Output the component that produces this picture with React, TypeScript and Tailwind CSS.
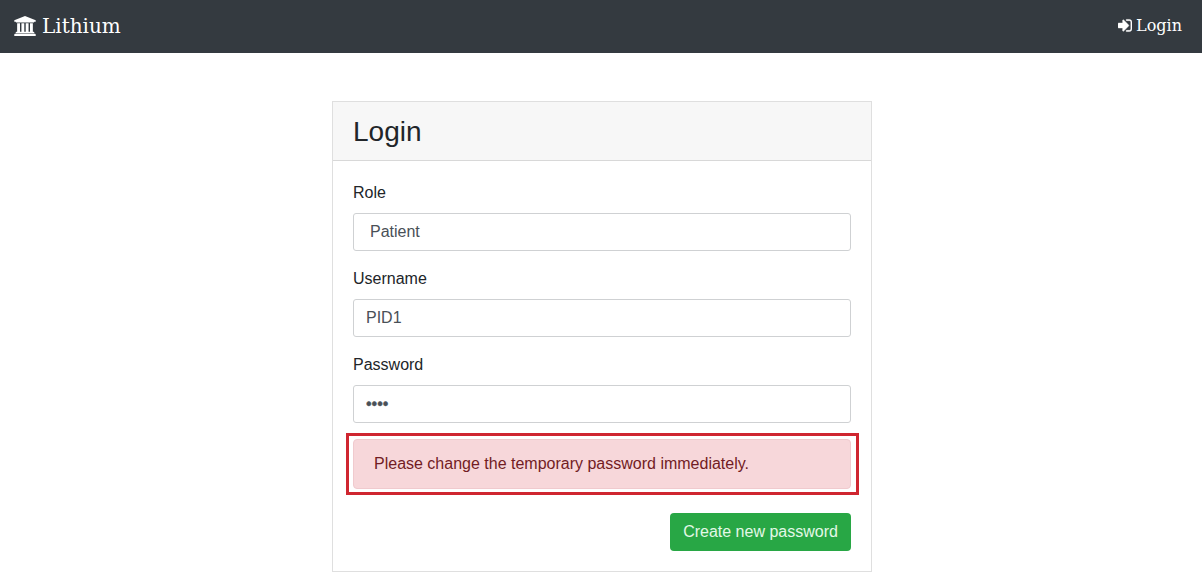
import type { ReactNode } from "react";

function Field({ label, children }: { label: string; children: ReactNode }) {
  return (
    <div className="mb-4">
      <label className="mb-2 block leading-6">{label}</label>
      {children}
    </div>
  );
}

const control =
  "flex h-[38px] w-full items-center rounded-[3px] border border-[#cfd1d3] bg-white px-3 text-[#495057]";

function BankIcon() {
  return (
    <svg className="h-[20px] w-[22px]" viewBox="0 0 1920 1792" fill="currentColor">
      <path d="M960 0l960 384v128h-128q0 26-20.500 45t-48.500 19h-1526q-28 0-48.500-19t-20.500-45h-128v-128zM256 640h256v768h128v-768h256v768h128v-768h256v768h128v-768h256v768h59q28 0 48.500 19t20.500 45v64h-1664v-64q0-26 20.500-45t48.500-19h59v-768zM1851 1600q28 0 48.500 19t20.500 45v128h-1920v-128q0-26 20.500-45t48.500-19h1782z" />
    </svg>
  );
}

function SignInIcon() {
  return (
    <svg className="mb-px h-[17px] w-[14px]" viewBox="0 0 1536 1792" preserveAspectRatio="none" fill="currentColor" stroke="currentColor" strokeWidth="50">
      <path d="M1184 896q0 26-19 45l-544 544q-19 19-45 19t-45-19-19-45v-288h-448q-26 0-45-19t-19-45v-384q0-26 19-45t45-19h448v-288q0-26 19-45t45-19 45 19l544 544q19 19 19 45zM1536 544v704q0 119-84.500 203.500t-203.500 84.500h-320q-13 0-22.500-9.500t-9.500-22.500q0-4-1-20t-.5-26.500 3-23.500 10-19.500 20.500-6.500h320q66 0 113-47t47-113v-704q0-66-47-113t-113-47h-312l-11.500-1-11.500-3-8-5.500-7-9-2-13.500q0-4-1-20t-.5-26.500 3-23.500 10-19.500 20.500-6.500h320q119 0 203.500 84.500t84.500 203.500z" />
    </svg>
  );
}

export default function App() {
  return (
    <div className="h-[588px] overflow-hidden bg-white font-['Liberation_Sans',sans-serif] text-base text-[#212529]">
      <nav className="flex h-[53px] items-center justify-between bg-[#343a40] pr-5 pb-0.5 pl-[14px] font-['DejaVu_Serif',serif] text-white">
        <a className="flex items-center gap-1.5 text-xl">
          <BankIcon />
          Lithium
        </a>
        <a className="flex items-center gap-1 text-base">
          <SignInIcon />
          Login
        </a>
      </nav>
      <main className="mt-12 ml-[332px] w-[540px] border border-[#dfdfdf] bg-white">
        <header className="flex h-[59px] items-center border-b border-[#d8d8d8] bg-[#f7f7f7] px-5 pt-0.5">
          <h1 className="text-[28px] leading-[34px]">Login</h1>
        </header>
        <form className="p-5">
          <Field label="Role">
            <div className={control}><span className="pl-1">Patient</span></div>
          </Field>
          <Field label="Username">
            <div className={control}>PID1</div>
          </Field>
          <Field label="Password">
            <input type="password" readOnly value="1234" className={`${control} [-webkit-text-stroke:0.4px_#495057]`} />
          </Field>
          <div className="-mt-1.5 -mr-2 -ml-[7px] border-[3px] border-[#cf2630] py-[3px] pr-[5px] pl-1">
            <div className="flex h-[50px] items-center rounded-[4px] border border-[#f0cace] bg-[#f7d7da] px-5 text-[#721c24]">
              Please change the temporary password immediately.
            </div>
          </div>
          <div className="mt-[18px] flex justify-end">
            <button type="button" className="h-[38px] w-[181px] rounded-[4px] bg-[#28a745] text-[#e3f8e7]">
              Create new password
            </button>
          </div>
        </form>
      </main>
    </div>
  );
}
